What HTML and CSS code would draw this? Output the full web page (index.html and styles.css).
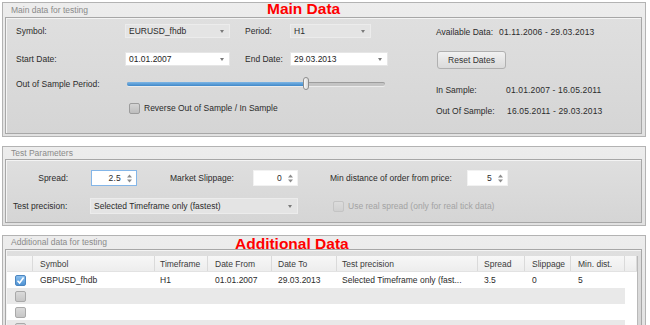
FILE: index.html
```html
<!DOCTYPE html>
<html>
<head>
<meta charset="utf-8">
<link rel="stylesheet" href="styles.css">
</head>
<body>
<div class="page">
  <section class="panel">
    <div class="ptitle t14">Main data for testing<span class="note note-main">Main Data</span></div>
    <div class="pbody main-body">
      <div class="main-left">
        <div class="row r-sym">
          <span class="lbl w109">Symbol:</span>
          <div class="combo gray w105">EURUSD_fhdb<i class="arr"></i></div>
          <span class="lbl w45 ml15">Period:</span>
          <div class="combo gray w81">H1<i class="arr"></i></div>
        </div>
        <div class="row r-date">
          <span class="lbl w109">Start Date:</span>
          <div class="combo white w105">01.01.2007<i class="arr"></i></div>
          <span class="lbl w45 ml15">End Date:</span>
          <div class="combo white w98">29.03.2013<i class="arr"></i></div>
        </div>
        <div class="row r-slider">
          <span class="lbl w111">Out of Sample Period:</span>
          <div class="track"><div class="fill"></div><div class="thumb"></div></div>
        </div>
        <div class="row r-check">
          <span class="chk"></span>
          <span class="chk-text">Reverse Out of Sample / In Sample</span>
        </div>
      </div>
      <div class="main-right">
        <div class="row r-avail"><span class="lbl w63">Available Data:</span><span class="val">01.11.2006 - 29.03.2013</span></div>
        <div class="btn">Reset Dates</div>
        <div class="row r-in"><span class="lbl w70">In Sample:</span><span class="val">01.01.2007 - 16.05.2011</span></div>
        <div class="row r-out"><span class="lbl w71">Out Of Sample:</span><span class="val">16.05.2011 - 29.03.2013</span></div>
      </div>
    </div>
  </section>

  <section class="panel">
    <div class="ptitle t12">Test Parameters</div>
    <div class="pbody test-body">
      <div class="row r-spin">
        <span class="lbl w55 right">Spread:</span>
        <div class="spin focus w46 ml23"><span class="num">2.5</span><svg class="ud" width="5" height="9" viewBox="0 0 5 9"><polygon points="0,3.5 2.5,0.5 5,3.5" fill="#8c8c8c"/><polygon points="0,5.5 2.5,8.5 5,5.5" fill="#8c8c8c"/></svg></div>
        <span class="lbl w83 ml33">Market Slippage:</span>
        <div class="spin w45"><span class="num">0</span><svg class="ud" width="5" height="9" viewBox="0 0 5 9"><polygon points="0,3.5 2.5,0.5 5,3.5" fill="#8c8c8c"/><polygon points="0,5.5 2.5,8.5 5,5.5" fill="#8c8c8c"/></svg></div>
        <span class="lbl w137 ml32">Min distance of order from price:</span>
        <div class="spin w41"><span class="num">5</span><svg class="ud" width="5" height="9" viewBox="0 0 5 9"><polygon points="0,3.5 2.5,0.5 5,3.5" fill="#8c8c8c"/><polygon points="0,5.5 2.5,8.5 5,5.5" fill="#8c8c8c"/></svg></div>
      </div>
      <div class="row r-prec">
        <span class="lbl w77">Test precision:</span>
        <div class="combo gray w208 tall">Selected Timeframe only (fastest)<i class="arr"></i></div>
        <span class="chk disabled ml35"></span>
        <span class="chk-text dis">Use real spread (only for real tick data)</span>
      </div>
    </div>
  </section>

  <section class="panel">
    <div class="ptitle t13">Additional data for testing<span class="note note-add">Additional Data</span></div>
    <div class="pbody add-body">
      <div class="tbl">
        <div class="thead">
          <div class="c c0"></div>
          <div class="c c1">Symbol</div>
          <div class="c c2">Timeframe</div>
          <div class="c c3">Date From</div>
          <div class="c c4">Date To</div>
          <div class="c c5">Test precision</div>
          <div class="c c6">Spread</div>
          <div class="c c7">Slippage</div>
          <div class="c c8">Min. dist.</div>
          <div class="c cfill"></div>
        </div>
        <div class="tr">
          <div class="c c0"><span class="tchk on"><svg width="9" height="9" viewBox="0 0 9 9"><path d="M1.5 4.8 L3.6 7 L7.6 1.6" fill="none" stroke="#fff" stroke-width="1.6"/></svg></span></div>
          <div class="c c1">GBPUSD_fhdb</div>
          <div class="c c2">H1</div>
          <div class="c c3">01.01.2007</div>
          <div class="c c4">29.03.2013</div>
          <div class="c c5">Selected Timeframe only (fast...</div>
          <div class="c c6">3.5</div>
          <div class="c c7">0</div>
          <div class="c c8">5</div>
        </div>
        <div class="tr alt">
          <div class="c c0"><span class="tchk"></span></div>
        </div>
        <div class="tr">
          <div class="c c0"><span class="tchk"></span></div>
        </div>
        <div class="tr alt">
          <div class="c c0"><span class="tchk"></span></div>
        </div>
      </div>
    </div>
  </section>
</div>
</body>
</html>
```
FILE: styles.css
```css
* { box-sizing: border-box; }
html, body { height: 325px; overflow: hidden; }
body {
  margin: 0;
  background: #fff;
  font-family: "Liberation Sans", Arial, sans-serif;
  font-size: 8.5px;
  color: #2b2b2b;
}
.page {
  padding: 2px 4px 0 2px;
  display: flex;
  flex-direction: column;
  gap: 9px;
}
.panel {
  border: 1px solid #b3b3b3;
  background: linear-gradient(#ededed, #e1e1e1);
  padding: 0 3px 2px 2px;
}
.ptitle {
  position: relative;
  padding-left: 6px;
  color: #8a8a8a;
}
.t14 { height: 14px; line-height: 14px; }
.t12 { height: 12px; line-height: 12px; }
.t13 { height: 13px; line-height: 13px; }
.note {
  position: absolute;
  color: #ff0000;
  font-weight: bold;
  font-size: 15.5px;
  line-height: 16px;
  white-space: nowrap;
}
.note-main { left: 262px; top: -2px; }
.note-add { left: 230px; top: 0px; }

.pbody {
  border: 1px solid #a7a7a7;
  box-shadow: inset 1px 1px 0 #f4f4f4;
  background: linear-gradient(#dfdfdf, #d5d5d5);
}

.row { display: flex; align-items: center; }
.lbl { flex: none; white-space: nowrap; }
.right { text-align: right; }
.w45 { width: 45px; } .w55 { width: 55px; } .w63 { width: 63px; }
.w70 { width: 70px; } .w71 { width: 71px; } .w77 { width: 77px; }
.w83 { width: 83px; } .w109 { width: 109px; } .w111 { width: 111px; }
.w137 { width: 137px; }
.w41 { width: 41px; } .w46 { width: 46px; }
.w81 { width: 81px; } .w98 { width: 98px; } .w105 { width: 105px; } .w208 { width: 208px; }
.ml15 { margin-left: 15px; } .ml23 { margin-left: 23px; } .ml32 { margin-left: 32px; }
.ml33 { margin-left: 33px; } .ml35 { margin-left: 35px; }

/* main data panel */
.main-body {
  height: 117px;
  display: flex;
  padding: 6px 0 0 10px;
}
.main-left { display: flex; flex-direction: column; }
.r-sym, .r-date { height: 14px; }
.r-date { margin-top: 14px; }
.r-slider { height: 14px; margin-top: 11px; }
.r-check { height: 12px; margin-top: 11px; padding-left: 113px; }

.combo {
  position: relative;
  flex: none;
  height: 14px;
  line-height: 12px;
  padding-left: 3px;
  border: 1px solid #efefef;
  white-space: nowrap;
}
.combo.tall { height: 16px; line-height: 14px; }
.combo.gray { background: #e4e4e4; border-color: #ececec; }
.combo.white { background: #fff; border-color: #e6e6e6; color: #1e1e1e; }
.arr {
  position: absolute;
  right: 5px;
  top: 50%;
  margin-top: -1px;
  border-left: 2.5px solid transparent;
  border-right: 2.5px solid transparent;
  border-top: 3.5px solid #7a7a7a;
}

.track {
  position: relative;
  width: 258px;
  height: 4px;
  border-radius: 2px;
  background: #c4c4c4;
  box-shadow: inset 0 1px 0 #9d9d9d, 0 1px 0 #ececec;
}
.fill {
  width: 179px;
  height: 4px;
  border-radius: 2px 0 0 2px;
  background: linear-gradient(#7db6e6, #3f88c9);
}
.thumb {
  position: absolute;
  left: 176px;
  top: -5px;
  width: 6px;
  height: 13px;
  border: 1px solid #8d8d8d;
  border-radius: 3px;
  background: linear-gradient(90deg, #fafafa, #d8d8d8);
}

.chk {
  flex: none;
  width: 11px;
  height: 11px;
  border: 1px solid #9c9c9c;
  border-radius: 2px;
  background: linear-gradient(#d4d4d4, #bdbdbd);
}
.chk.disabled { border-color: #c4c4c4; background: linear-gradient(#dcdcdc, #d0d0d0); }
.chk-text { margin-left: 4px; white-space: nowrap; }
.chk-text.dis { color: #a3a3a3; }

.main-right {
  margin-left: 48px;
  display: flex;
  flex-direction: column;
  align-items: flex-start;
}
.r-avail { height: 14px; margin-top: 1px; }
.val { white-space: nowrap; letter-spacing: 0.15px; }
.btn {
  margin-top: 12px;
  margin-left: 1px;
  width: 69px;
  height: 18px;
  line-height: 16px;
  text-align: center;
  border: 1px solid #b0b0b0;
  border-radius: 3px;
  background: linear-gradient(#f1f1f1, #dadada);
  color: #333;
}
.r-in { height: 14px; margin-top: 14px; }
.r-out { height: 14px; margin-top: 7px; }

/* test parameters */
.test-body {
  height: 64px;
  padding: 10px 0 0 7px;
}
.r-spin { height: 16px; }
.r-prec { height: 16px; margin-top: 12px; }
.spin {
  flex: none;
  display: flex;
  align-items: center;
  justify-content: flex-end;
  height: 16px;
  padding-right: 4px;
  background: #fff;
  border: 1px solid #f2f2f2;
}
.spin.focus { border-color: #84b6e8; }
.num { margin-right: 6px; letter-spacing: 0.2px; }
.ud { display: block; }

/* additional data */
.add-body {
  height: 90px;
  padding: 6px 3px 0 1px;
}
.tbl {
  background: #fff;
  border-right: 1px solid #b9b9b9;
  height: 100%;
}
.thead {
  display: flex;
  height: 16px;
  background: linear-gradient(#f7f7f7, #ededed);
  border-bottom: 1px solid #e2e2e2;
}
.thead .c { border-right: 1px solid #dadada; color: #3a3a3a; }
.thead .cfill { flex: 1; }
.tr {
  display: flex;
  width: 618px;
  height: 16px;
}
.tr.alt { background: #e9e9e9; }
.c {
  flex: none;
  display: flex;
  align-items: center;
  padding-left: 6px;
  white-space: nowrap;
  overflow: hidden;
}
.c0 { width: 26px; padding-left: 0; justify-content: center; }
.c1 { width: 122px; padding-left: 7px; }
.c2 { width: 53px; padding-left: 5px; }
.c3 { width: 64px; padding-left: 7px; }
.c4 { width: 65px; padding-left: 6px; }
.c5 { width: 141px; padding-left: 5px; }
.c6 { width: 47px; }
.c7 { width: 46px; padding-left: 7px; }
.c8 { width: 54px; padding-left: 7px; }
.tchk {
  display: flex;
  align-items: center;
  justify-content: center;
  width: 11px;
  height: 11px;
  border: 1px solid #a9a9a9;
  border-radius: 2px;
  background: linear-gradient(#dadada, #c6c6c6);
}
.tchk.on {
  border-color: #4c86c0;
  background: linear-gradient(#8cc0ee, #4f93d4);
}
.tchk svg { display: block; }
```
